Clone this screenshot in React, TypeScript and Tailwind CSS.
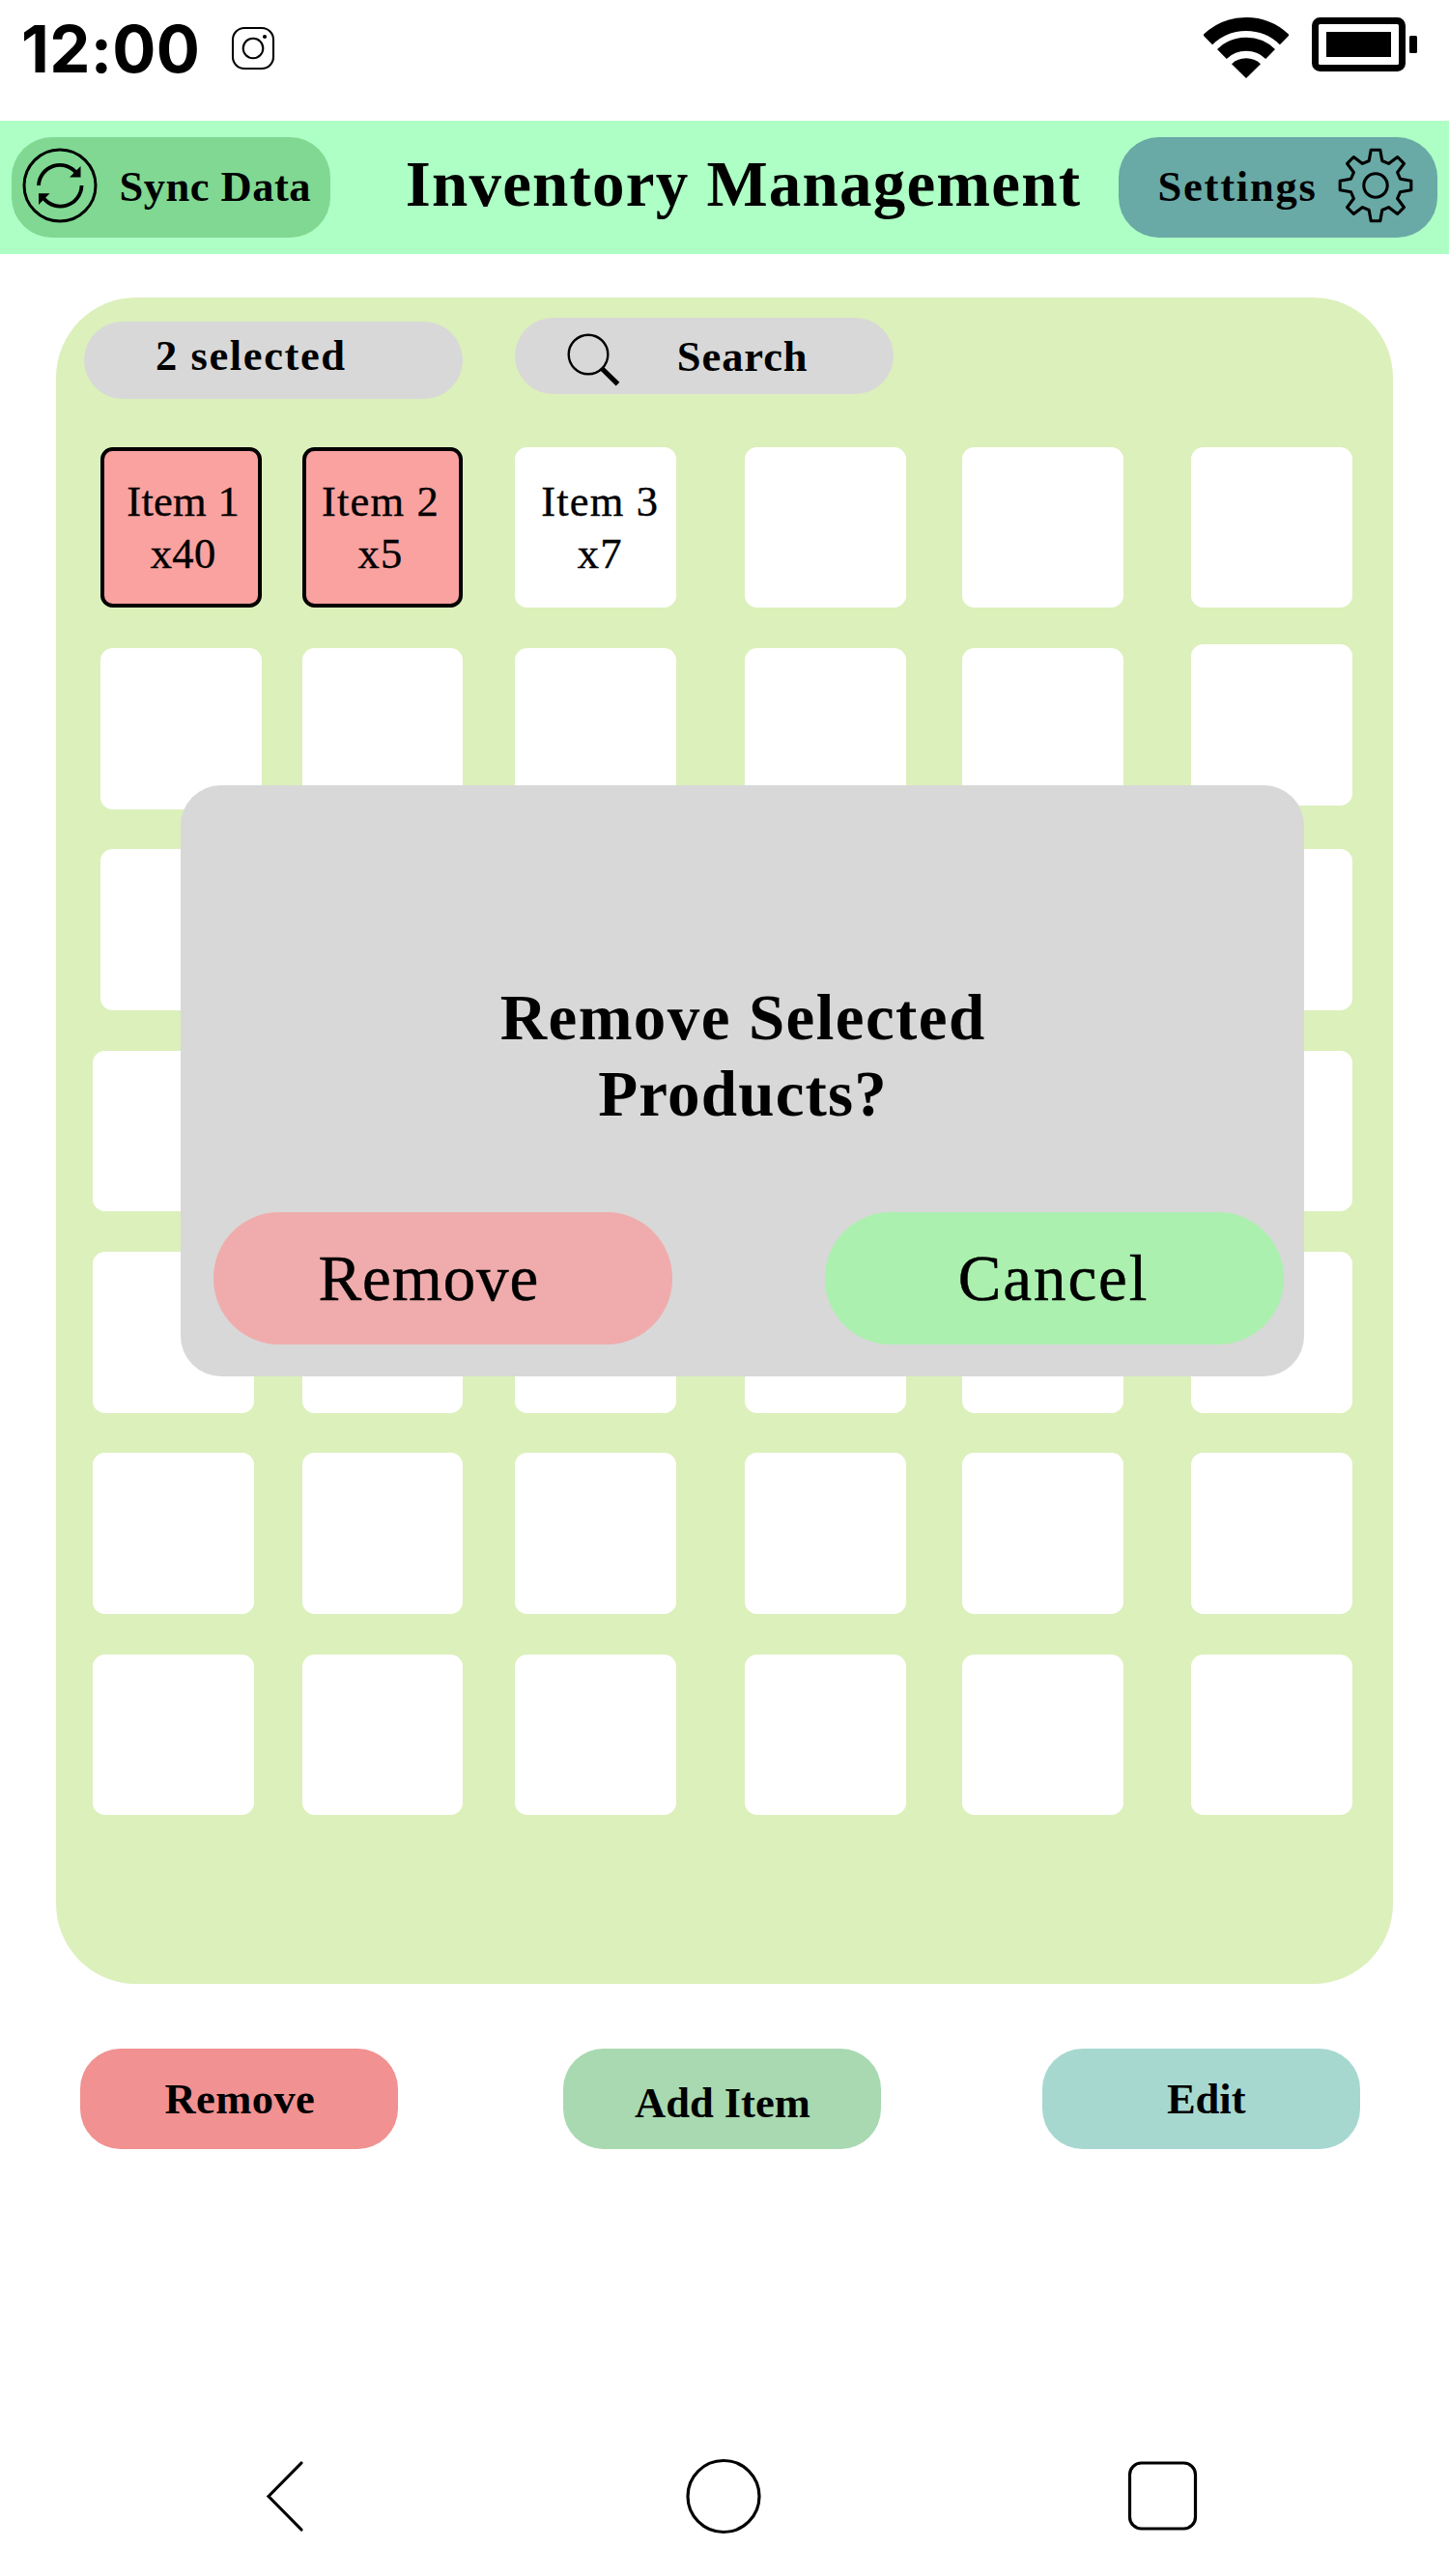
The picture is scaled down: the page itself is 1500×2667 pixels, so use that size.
import React from "react";
import clsx from "clsx";

const SERIF = "font-['Liberation_Serif',serif]";

type Slot = { name?: string; count?: string; selected?: boolean; className?: string };

const ROWS = 7;
const COLS = 6;

const stock: Record<number, Slot> = {
  0: { name: "Item 1", count: "x40", selected: true, className: "pl-[4px] tracking-[0.3px]" },
  1: { name: "Item 2", count: "x5", selected: true, className: "pr-[4px] tracking-[1.2px]" },
  2: { name: "Item 3", count: "x7", className: "pl-[9px] tracking-[1.2px]" },
  11: { className: "-mt-[4px]" },
};

const slots: Slot[] = Array.from({ length: ROWS * COLS }, (_, i) => {
  const shifted = i % COLS === 0 && i / COLS >= 3;
  return stock[i] ?? (shifted ? { className: "-ml-[8.2px]" } : {});
});

function InstagramIcon() {
  return (
    <svg className="ml-[33px] size-[46px]" viewBox="0 0 46 46" fill="none" stroke="#000" strokeWidth="2.1">
      <rect x="2" y="2" width="42" height="42" rx="12" />
      <circle cx="23" cy="23" r="10.3" />
      <circle cx="35" cy="11" r="2.1" fill="#000" stroke="none" />
    </svg>
  );
}

function WifiIcon() {
  return (
    <svg className="h-[64px] w-[88px]" viewBox="0 0 88 64" fill="none" stroke="#000" strokeWidth="14">
      <path d="M4.2 24.2A57 57 0 0 1 83.8 24.2" />
      <path d="M18.9 39A36 36 0 0 1 69.1 39" />
      <path d="M29 49.2A22 22 0 0 1 59 49.2L44 64Z" fill="#000" stroke="none" />
    </svg>
  );
}

function BatteryIcon() {
  return (
    <svg className="h-[56px] w-[110px]" viewBox="0 0 110 56">
      <rect x="3.5" y="3.5" width="90" height="49" rx="5" fill="none" stroke="#000" strokeWidth="7" />
      <rect x="15" y="15" width="67" height="26" />
      <rect x="101" y="19" width="8" height="18" rx="1.5" />
    </svg>
  );
}

function SyncIcon() {
  return (
    <svg className="-mt-[3px] size-[80px]" viewBox="0 0 80 80" fill="none" stroke="#000">
      <circle cx="40" cy="40" r="37" strokeWidth="3" />
      <path d="M18 40A22 22 0 0 1 57.5 27.5" strokeWidth="3.8" />
      <path d="M62.5 40A22 22 0 0 1 23 53" strokeWidth="3.8" />
      <path d="M61.5 20V31.5H50Z M18 48.2H29.5L18 60Z" fill="#000" stroke="none" />
    </svg>
  );
}

function GearIcon() {
  return (
    <svg className="-mt-[3px] size-[80px]" viewBox="-40 -40 80 80" fill="none" stroke="#000" strokeWidth="3.1">
      <path
        d="M-4.8 -36.8H4.8L6.8 -25.5L13.5 -22.6L22.7 -29.5L29.5 -22.7L22.6 -13.5L25.5 -6.8L36.8 -4.8V4.8L25.5 6.8L22.6 13.5L29.5 22.7L22.7 29.5L13.5 22.6L6.8 25.5L4.8 36.8H-4.8L-6.8 25.5L-13.5 22.6L-22.7 29.5L-29.5 22.7L-22.6 13.5L-25.5 6.8L-36.8 4.8V-4.8L-25.5 -6.8L-22.6 -13.5L-29.5 -22.7L-22.7 -29.5L-13.5 -22.6L-6.8 -25.5Z"
        strokeLinejoin="round"
      />
      <circle r="12.2" />
    </svg>
  );
}

function SearchIcon() {
  return (
    <svg className="h-[56px] w-[56px]" viewBox="0 0 56 56" fill="none" stroke="#000">
      <circle cx="22" cy="22" r="20.3" strokeWidth="2.4" />
      <path d="M35.5 36L52.5 52.7" strokeWidth="5.2" />
    </svg>
  );
}

function StatusBar() {
  return (
    <div className="flex h-[125px] items-start">
      <span className="mt-[10px] ml-[22px] w-[184px] font-['Inter'] text-[67px] leading-[81px] font-bold tracking-[0.3px] whitespace-nowrap">
        12:00
      </span>
      <div className="mt-[27px]">
        <InstagramIcon />
      </div>
      <div className="mt-[17px] ml-auto flex gap-[24px] pr-[32px]">
        <WifiIcon />
        <div className="pt-px">
          <BatteryIcon />
        </div>
      </div>
    </div>
  );
}

function Header() {
  return (
    <header className="flex h-[137.5px] items-center justify-between bg-[#aeffc5] px-[12.4px] font-bold">
      <button className="flex h-[104.2px] w-[329.2px] items-center rounded-[41.7px] bg-[#80d892] pl-[9.5px] text-[44.5px] tracking-[0.5px]">
        <SyncIcon />
        <span className="ml-[21.5px] whitespace-nowrap">Sync Data</span>
      </button>
      <h1 className="pb-[7px] pl-[39px] text-[67px] leading-[80px] tracking-[1.2px] whitespace-nowrap">
        Inventory Management
      </h1>
      <button className="flex h-[104.2px] w-[329.2px] items-center justify-between rounded-[41.7px] bg-[#69a9a6] pr-[23.5px] pl-[40px] text-[44.5px] tracking-[1.8px]">
        <span>Settings</span>
        <GearIcon />
      </button>
    </header>
  );
}

function ItemSlot({ name, count, selected, className }: Slot) {
  return (
    <div
      className={clsx(
        "flex size-[166.7px] flex-col items-center justify-center rounded-[12.5px] text-[44.5px] leading-[54px] whitespace-nowrap [-webkit-text-stroke:0.4px_#000]",
        selected ? "border-4 border-black bg-[#f9a2a0]" : "bg-white",
        className,
      )}
    >
      {name && <span>{name}</span>}
      {count && <span>{count}</span>}
    </div>
  );
}

function RemoveDialog() {
  return (
    <div className="absolute top-[504.3px] left-[129.2px] flex h-[612.5px] w-[1162.5px] flex-col justify-end rounded-[41.7px] bg-[#d8d8d8] pr-[20.5px] pb-[33px] pl-[33.3px]">
      <h2 className="mb-[82.5px] pr-[12px] text-center text-[67px] leading-[79.2px] font-bold">
        <span className="block tracking-[1.4px]">Remove Selected</span>
        <span className="block tracking-[1.2px]">Products?</span>
      </h2>
      <div className="flex justify-between text-[67px] [-webkit-text-stroke:0.5px_#000]">
        <button className="h-[137.5px] w-[475px] rounded-[68px] bg-[#f0acac] pr-[29px] tracking-[0.9px]">Remove</button>
        <button className="h-[137.5px] w-[475px] rounded-[68px] bg-[#abf0af] pr-[3px] tracking-[1.9px]">Cancel</button>
      </div>
    </div>
  );
}

function InventoryPanel() {
  return (
    <main className="relative mx-[58.3px] mt-[45.9px] h-[1745.8px] rounded-[83px] bg-[#dcf0bb]">
      <div className="flex h-[154.2px] items-start pt-[20.8px] pl-[29.2px] text-[44.5px] font-bold">
        <div className="mt-[4.2px] flex h-[79.2px] w-[391.7px] items-center rounded-full bg-[#d8d8d8] pb-[9px] pl-[73.5px] tracking-[1.6px]">
          2 selected
        </div>
        <div className="ml-[54.2px] flex h-[79.2px] w-[391.7px] items-center rounded-full bg-[#d8d8d8] pl-[53.5px] tracking-[0.9px]">
          <div className="pt-[8px]">
            <SearchIcon />
          </div>
          <span className="ml-[58px] pt-px">Search</span>
        </div>
      </div>
      <div className="grid auto-rows-[208.33px] grid-cols-[208.3px_220.8px_237.5px_225px_237.5px_166.7px] pl-[46px]">
        {slots.map((slot, i) => (
          <ItemSlot key={i} {...slot} />
        ))}
      </div>
      <RemoveDialog />
    </main>
  );
}

function Actions() {
  return (
    <div className="mt-[67px] flex pl-[83.3px] text-[44.5px] font-bold">
      <button className="h-[104.2px] w-[329.2px] rounded-[41.7px] bg-[#f19191] pl-px tracking-[0.4px]">Remove</button>
      <button className="ml-[170.8px] h-[104.2px] w-[329.2px] rounded-[41.7px] bg-[#a8d9b1] pt-[8px]">Add Item</button>
      <button className="ml-[166.7px] h-[104.2px] w-[329.2px] rounded-[41.7px] bg-[#a6d8d0] pl-[10px]">Edit</button>
    </div>
  );
}

function NavBar() {
  return (
    <nav className="mt-auto mb-[43px] flex h-[80px] items-center pl-[273px]">
      <svg className="h-[80px] w-[44px]" viewBox="0 0 44 80" fill="none" stroke="#000" strokeWidth="3.2">
        <path d="M39 6L5 40.5L39 75" strokeLinecap="round" />
      </svg>
      <svg className="ml-[392px] size-[80px]" viewBox="0 0 80 80" fill="none" stroke="#000" strokeWidth="3.2">
        <circle cx="40" cy="40.5" r="37" />
      </svg>
      <svg className="ml-[375px] size-[80px]" viewBox="0 0 80 80" fill="none" stroke="#000" strokeWidth="3.2">
        <rect x="5.5" y="6" width="68" height="68" rx="12" />
      </svg>
    </nav>
  );
}

export default function App() {
  return (
    <div className={clsx("flex h-[2667px] w-[1500px] flex-col overflow-hidden bg-white text-black", SERIF)}>
      <StatusBar />
      <Header />
      <InventoryPanel />
      <Actions />
      <NavBar />
    </div>
  );
}
